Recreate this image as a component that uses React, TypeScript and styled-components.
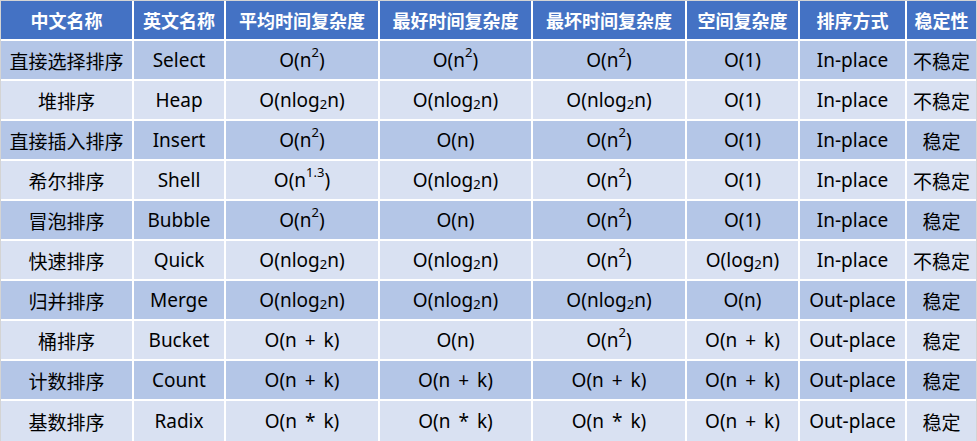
import React from "react";
import styled, { createGlobalStyle } from "styled-components";

const Global = createGlobalStyle`
  html, body { margin: 0; padding: 0; background: #ffffff; }
  body { font-family: "Noto Sans", "Noto Sans CJK SC", sans-serif; }
`;

const Frame = styled.div`
  width: 977px;
  height: 441px;
  box-sizing: border-box;
  padding: 1px 1px 0 1px;
  background: #d4d4d4;
  overflow: hidden;
`;

const Grid = styled.div`
  display: grid;
  grid-template-columns: 131px 90px 152px 151px 152px 111px 105px 69px;
  grid-template-rows: repeat(10, 38px) 40px;
  gap: 2px;
  background: #ffffff;
  height: 440px;
`;

const HeadCell = styled.div`
  background: #4472c4;
  color: #ffffff;
  font-family: "Noto Sans CJK SC", sans-serif;
  font-weight: 700;
  font-size: 18px;
  display: flex;
  align-items: center;
  justify-content: center;
  white-space: nowrap;
`;

const Cell = styled.div<{ $dark: boolean; $cjk?: boolean }>`
  background: ${(p) => (p.$dark ? "#b4c6e7" : "#d9e1f2")};
  color: #000000;
  font-family: ${(p) =>
    p.$cjk ? '"Noto Sans CJK SC", sans-serif' : '"Noto Sans", "Noto Sans CJK SC", sans-serif'};
  font-size: 19px;
  word-spacing: 3px;
  display: flex;
  align-items: center;
  justify-content: center;
  white-space: nowrap;
  overflow: visible;
`;

const Sup = styled.span`
  font-size: 13px;
  position: relative;
  top: -8px;
  line-height: 0;
`;

const Sub = styled.span`
  font-size: 13px;
  position: relative;
  top: 4px;
  line-height: 0;
`;

type V = React.ReactNode;

const n2: V = (
  <>
    O(n<Sup>2</Sup>)
  </>
);
const n13: V = (
  <>
    O(n<Sup>1.3</Sup>)
  </>
);
const nlog: V = (
  <>
    O(nlog<Sub>2</Sub>n)
  </>
);
const log2n: V = (
  <>
    O(log<Sub>2</Sub>n)
  </>
);
const on = "O(n)";
const o1 = "O(1)";
const nk = "O(n + k)";
const nmk = "O(n * k)";

const headers = [
  "中文名称",
  "英文名称",
  "平均时间复杂度",
  "最好时间复杂度",
  "最坏时间复杂度",
  "空间复杂度",
  "排序方式",
  "稳定性",
];

const rows: V[][] = [
  ["直接选择排序", "Select", n2, n2, n2, o1, "In-place", "不稳定"],
  ["堆排序", "Heap", nlog, nlog, nlog, o1, "In-place", "不稳定"],
  ["直接插入排序", "Insert", n2, on, n2, o1, "In-place", "稳定"],
  ["希尔排序", "Shell", n13, nlog, n2, o1, "In-place", "不稳定"],
  ["冒泡排序", "Bubble", n2, on, n2, o1, "In-place", "稳定"],
  ["快速排序", "Quick", nlog, nlog, n2, log2n, "In-place", "不稳定"],
  ["归并排序", "Merge", nlog, nlog, nlog, on, "Out-place", "稳定"],
  ["桶排序", "Bucket", nk, on, n2, nk, "Out-place", "稳定"],
  ["计数排序", "Count", nk, nk, nk, nk, "Out-place", "稳定"],
  ["基数排序", "Radix", nmk, nmk, nmk, nk, "Out-place", "稳定"],
];

export default function App() {
  return (
    <>
      <Global />
      <Frame>
        <Grid>
          {headers.map((h) => (
            <HeadCell key={h}>{h}</HeadCell>
          ))}
          {rows.map((r, i) =>
            r.map((c, j) => (
              <Cell key={`${i}-${j}`} $dark={i % 2 === 0} $cjk={j === 0 || j === 7}>
                {c}
              </Cell>
            ))
          )}
        </Grid>
      </Frame>
    </>
  );
}
